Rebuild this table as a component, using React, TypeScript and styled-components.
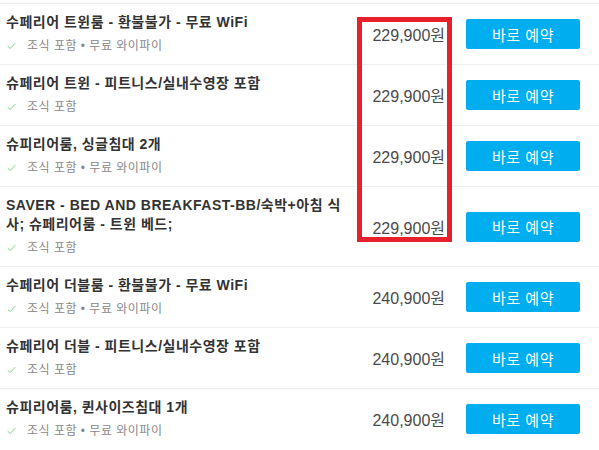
import styled, { createGlobalStyle } from "styled-components";

const GlobalStyle = createGlobalStyle`
  html, body {
    margin: 0;
    padding: 0;
    background: #fff;
  }
  body {
    font-family: "Liberation Sans", "Noto Sans CJK KR", sans-serif;
  }
`;

type Room = {
  name: string;
  perks: string[];
  price: string;
};

const rooms: Room[] = [
  { name: "수페리어 트윈룸 - 환불불가 - 무료 WiFi", perks: ["조식 포함", "무료 와이파이"], price: "229,900원" },
  { name: "슈페리어 트윈 - 피트니스/실내수영장 포함", perks: ["조식 포함"], price: "229,900원" },
  { name: "슈피리어룸, 싱글침대 2개", perks: ["조식 포함", "무료 와이파이"], price: "229,900원" },
  {
    name: "SAVER - BED AND BREAKFAST-BB/숙박+아침 식사; 슈페리어룸 - 트윈 베드;",
    perks: ["조식 포함"],
    price: "229,900원",
  },
  { name: "수페리어 더블룸 - 환불불가 - 무료 WiFi", perks: ["조식 포함", "무료 와이파이"], price: "240,900원" },
  { name: "슈페리어 더블 - 피트니스/실내수영장 포함", perks: ["조식 포함"], price: "240,900원" },
  { name: "슈피리어룸, 퀸사이즈침대 1개", perks: ["조식 포함", "무료 와이파이"], price: "240,900원" },
];

const App = () => {
  return (
    <>
      <GlobalStyle />
      <List>
        {rooms.map((room, i) => (
          <Row key={i}>
            <Info>
              <Title>{room.name}</Title>
              <Perks>
                <Check viewBox="0 0 10 8">
                  <path d="M0.8 4.2 L3.6 6.8 L9.2 0.8" />
                </Check>
                {room.perks.join(" • ")}
              </Perks>
            </Info>
            <Price>{room.price}</Price>
            <BookButton>바로 예약</BookButton>
          </Row>
        ))}
        <Highlight />
      </List>
    </>
  );
};

export default App;

const List = styled.div`
  position: relative;
  padding-top: 3px;
`;

const Row = styled.div`
  display: flex;
  align-items: center;
  border-top: 1px solid #eeeeee;
  padding: 9px 19px 9px 6px;
`;

const Info = styled.div`
  flex: 0 0 340px;
  display: flex;
  flex-direction: column;
  gap: 5px;
`;

const Title = styled.div`
  font-size: 14px;
  font-weight: bold;
  line-height: 19px;
  letter-spacing: 0.5px;
  color: #333;
`;

const Perks = styled.div`
  display: flex;
  align-items: center;
  font-size: 12px;
  line-height: 18px;
  letter-spacing: 0.5px;
  color: #888;
`;

const Check = styled.svg`
  width: 9px;
  height: 8px;
  margin: 0 11px 0 1px;
  fill: none;
  stroke: #7fd08c;
  stroke-width: 1.1;
`;

const Price = styled.div`
  flex: 1;
  text-align: right;
  font-size: 16px;
  color: #4a4a4a;
  margin-right: 21px;
`;

const BookButton = styled.button`
  width: 114px;
  height: 30px;
  border: none;
  border-radius: 2px;
  background: #00aeef;
  color: #fff;
  font-family: "Liberation Sans", "Noto Sans CJK KR", sans-serif;
  font-size: 15px;
  letter-spacing: 0.5px;
  padding: 0;
  cursor: pointer;
`;

const Highlight = styled.div`
  position: absolute;
  left: 357px;
  top: 17px;
  width: 95px;
  height: 225px;
  box-sizing: border-box;
  border: 5px solid #e8202a;
  pointer-events: none;
`;
